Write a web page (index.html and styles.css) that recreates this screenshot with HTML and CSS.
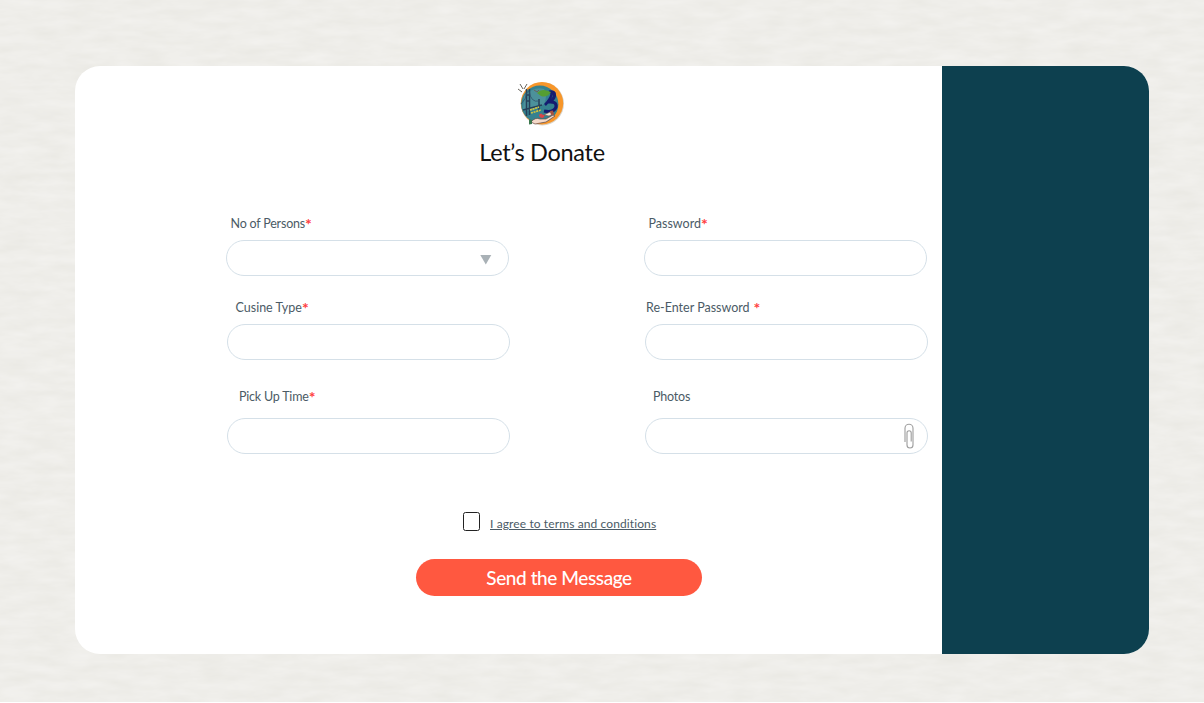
FILE: index.html
```html
<!DOCTYPE html>
<html lang="en">
<head>
<meta charset="utf-8">
<title>Let’s Donate</title>
<link rel="stylesheet" href="styles.css">
</head>
<body>
<svg class="paper" width="1204" height="703" aria-hidden="true">
  <filter id="grain" x="0" y="0" width="100%" height="100%" color-interpolation-filters="sRGB">
    <feTurbulence type="fractalNoise" baseFrequency="0.03 0.11" numOctaves="3" seed="8"/>
    <feColorMatrix values="0.04 0 0 0 0.915  0.04 0 0 0 0.911  0.05 0 0 0 0.89  0 0 0 0 1"/>
  </filter>
  <rect width="1204" height="702" filter="url(#grain)"/>
</svg>
<main class="card">
  <form class="panel">
    <header class="heading">
      <svg class="logo" width="48" height="48" viewBox="0 0 48 48" aria-hidden="true">
        <circle cx="25.4" cy="23.8" r="21.6" fill="#d8d4cc"/>
        <circle cx="25" cy="23.2" r="21.2" fill="#f7962a"/>
        <circle cx="22.8" cy="24.2" r="18.6" fill="#35818f"/>
        <path d="M7 16Q17 6 27 9Q31 15 27 24Q16 33 6 30Z" fill="#4c919b"/>
        <path d="M9.5 9V36M12.5 9V35M9 15h4M9 21h4M6 30L25 25M22 19v12" fill="none" stroke="#26405a" stroke-width="1.5"/>
        <path d="M12 11Q14 23 22 21M10 12Q9 20 4 24" fill="none" stroke="#31506b" stroke-width=".8"/>
        <path d="M1 9l4 3M3 4l3 5M10 4L7 9M17 10l3 2l2-2" fill="none" stroke="#69645c" stroke-width="1"/>
        <path d="M32 12Q38 11 37.500 15.500Q37 20 31 22Q40 21 39 27Q37 33 27 31" fill="none" stroke="#151b70" stroke-width="3.2"/>
        <path d="M28 25Q34 19 35 13" fill="none" stroke="#151b70" stroke-width="2.6"/>
        <path d="M20 13Q24 8 31 11L34 12Q30 18 24 16Z" fill="#559e32"/>
        <path d="M13 30L22 27M14 33L24 30" fill="none" stroke="#d3c43c" stroke-width="1.6" stroke-dasharray="2 .7"/>
        <path d="M14 42Q18 37 23 39L29 39L36 35L38 36L29 42L18 44Z" fill="#f4d9c9" stroke="#684b44" stroke-width=".7"/>
        <path d="M22 35Q24 32 26 35Q30 34 26 38Q22 38 22 35Z" fill="#dc4548"/>
        <path d="M27 35l6-3l4 2l-5 2Z" fill="#eee4d8" stroke="#704b40" stroke-width=".6"/>
        <path d="M12 39l3 1v4l-3 .5Z" fill="#3b774d"/>
        <path d="M33 31l3-.5l1 4l-3 .5Z" fill="#a7523e"/>
      </svg>
      <h1 class="title">Let’s Donate</h1>
    </header>

    <div class="row row-first">
      <div class="field">
        <label class="label persons"><span class="name">No of Persons</span><b class="req">*</b></label>
        <div class="input"><svg class="caret" width="12" height="10" viewBox="0 0 12 10"><path d="M.3 0H11.3L5.8 9.6Z" fill="#a9b1b6"/></svg></div>
      </div>
      <div class="field">
        <label class="label password"><span class="name">Password</span><b class="req">*</b></label>
        <div class="input"></div>
      </div>
    </div>

    <div class="row row-second">
      <div class="field">
        <label class="label cuisine"><span class="name">Cusine Type</span><b class="req">*</b></label>
        <div class="input"></div>
      </div>
      <div class="field">
        <label class="label reenter"><span class="name">Re-Enter Password</span><b class="req">*</b></label>
        <div class="input"></div>
      </div>
    </div>

    <div class="row row-third">
      <div class="field">
        <label class="label pickup"><span class="name">Pick Up Time</span><b class="req">*</b></label>
        <div class="input"></div>
      </div>
      <div class="field">
        <label class="label photos"><span class="name">Photos</span></label>
        <div class="input"><svg class="clip" width="10" height="26" viewBox="0 0 10 26"><path d="M1 19V5.2a4 4 0 0 1 8 0V22a3 3 0 0 1-6 0V9.8a2.1 2.1 0 0 1 4.2 0V18.5" fill="none" stroke="#a0a0a0" stroke-width="1.15"/></svg></div>
      </div>
    </div>

    <div class="terms">
      <span class="checkbox"></span>
      <a class="agree">I agree to terms and conditions</a>
    </div>
    <button class="send" type="button">Send the Message</button>
  </form>
  <aside class="side"></aside>
</main>
</body>
</html>
```
FILE: styles.css
```css
* { box-sizing: border-box; }
body {
  margin: 0;
  width: 1204px;
  height: 703px;
  padding: 66px 0 0 75px;
  overflow: hidden;
  background: #fff;
  font-family: Lato, "Open Sans", sans-serif;
  font-variant-ligatures: none;
}
.paper { position: absolute; top: 0; left: 0; z-index: -1; }
.card {
  display: flex;
  width: 1074px;
  height: 588px;
  border-radius: 25px;
  background: #fff;
  overflow: hidden;
}
.panel { width: 867px; display: flex; flex-direction: column; }
.side { flex: 1; background: #0d404f; }
.heading {
  display: flex;
  flex-direction: column;
  align-items: center;
  width: 200px;
  height: 149px;
  margin-left: 367px;
  padding-top: 14px;
}
.logo { margin-right: 2px; }
.title {
  margin: 9px 0 0;
  font-size: 23.5px;
  line-height: 30px;
  font-weight: 400;
  white-space: nowrap;
  letter-spacing: -0.3px;
  color: #111;
}
.row { display: flex; gap: 135px; margin-left: 152px; }
.row-first { margin-left: 150.5px; }
.row-second { margin-top: 23px; }
.row-third { margin-top: 29px; }
.field { width: 283px; }
.label {
  display: flex;
  align-items: flex-start;
  height: 25px;
  padding-top: 0.5px;
  font-size: 12.5px;
  line-height: 16px;
  color: #4b5b66;
  white-space: nowrap;
}
.row-third .label { height: 29px; padding-top: 0; }
.name { letter-spacing: -0.1px; }
.req { font-size: 16px; line-height: 15px; font-weight: 700; color: #ff4040; }
.persons { padding-left: 5px; }
.persons .name { letter-spacing: -0.2px; }
.password { padding: 1px 0 0 5px; }
.password .name { letter-spacing: 0; }
.cuisine { padding-left: 8.5px; }
.cuisine .name { letter-spacing: 0; }
.reenter { padding-left: 1px; }
.reenter .name { letter-spacing: 0; }
.reenter .req { margin-left: 4px; }
.pickup { padding-left: 12px; }
.pickup .name { letter-spacing: -0.2px; }
.photos { padding-left: 8px; }
.photos .name { letter-spacing: -0.2px; }
.input {
  display: flex;
  justify-content: flex-end;
  align-items: center;
  height: 36px;
  border: 1px solid #d5e0e8;
  border-radius: 18px;
  background: #fff;
}
.caret { margin: 4px 16px 0 0; }
.clip { margin-right: 13px; }
.terms { display: flex; height: 20px; margin: 58px 0 0 388px; }
.checkbox { width: 17px; height: 19px; border: 1px solid #222; border-radius: 2.5px; }
.agree {
  margin: 4px 0 0 10px;
  font-size: 12px;
  line-height: 16px;
  letter-spacing: 0.11px;
  color: #4b5b66;
  text-decoration: underline;
  text-underline-offset: 1px;
  white-space: nowrap;
}
.send {
  width: 286px;
  height: 37px;
  margin: 27px 0 0 341px;
  padding: 0;
  border: 0;
  border-radius: 19px;
  background: #ff5840;
  color: #fff;
  font: 500 19px/37px Lato, "Open Sans", sans-serif;
  letter-spacing: -0.42px;
  white-space: nowrap;
}
```
